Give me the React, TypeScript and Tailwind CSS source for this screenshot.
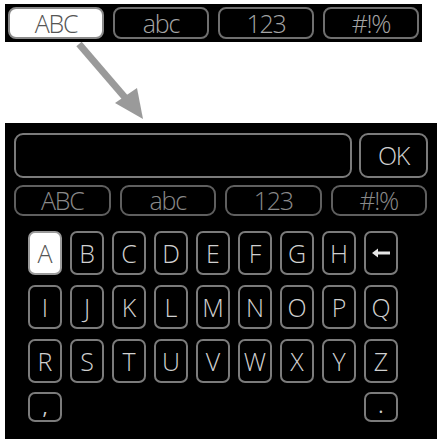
import React from 'react';

const font = { fontFamily: '"Open Sans", "DejaVu Sans", sans-serif' };

const topTabs = ['ABC', 'abc', '123', '#!%'];

const rows: string[][] = [
  ['A', 'B', 'C', 'D', 'E', 'F', 'G', 'H', '←'],
  ['I', 'J', 'K', 'L', 'M', 'N', 'O', 'P', 'Q'],
  ['R', 'S', 'T', 'U', 'V', 'W', 'X', 'Y', 'Z'],
];

const Key: React.FC<{ label: string; active?: boolean }> = ({ label, active }) => {
  if (label === '←') {
    return (
      <div className="w-[34px] h-[44px] rounded-[7px] border-2 border-[#7b7b7b] flex items-center justify-center">
        <svg width="20" height="10" viewBox="0 0 20 10">
          <path d="M1 5 L7 0.5 L7 3.5 L19 3.5 L19 6.5 L7 6.5 L7 9.5 Z" fill="#e6e6e6" />
        </svg>
      </div>
    );
  }
  return (
    <div
      className={`w-[34px] h-[44px] rounded-[7px] border-2 flex items-center justify-center text-[25px] leading-none font-[350] ${
        active ? 'bg-white border-[#9a9a9a] text-[#555]' : 'border-[#7b7b7b] text-[#d0d0d0]'
      }`}
    >
      {label}
    </div>
  );
};

export default function App() {
  return (
    <div className="w-[439px] h-[439px] bg-white overflow-hidden" style={font}>
      {/* top mode selector */}
      <div className="ml-[5px] mt-[4px] w-[417px] h-[38px] bg-black flex items-center gap-[9px] px-[3px]">
        {topTabs.map((t, i) => (
          <div
            key={t}
            className={`flex-1 h-[32px] rounded-[8px] border-2 flex items-center justify-center text-[25px] leading-none tracking-tighter font-[350] ${
              i === 0 ? 'bg-white border-[#8a8a8a] text-[#555]' : 'border-[#6f6f6f] text-[#a5a5a5]'
            }`}
          >
            {t}
          </div>
        ))}
      </div>

      {/* pointer arrow */}
      <svg width="439" height="81" viewBox="0 42 439 81" className="block">
        <line x1="79" y1="44" x2="128" y2="101" stroke="#9a9a9a" strokeWidth="7" />
        <polygon points="143,119 115,103 137,88" fill="#9a9a9a" />
      </svg>

      {/* keyboard panel */}
      <div className="ml-[5px] w-[432px] h-[316px] bg-black pt-[10px]">
        <div className="flex gap-[7px] pl-[9px] pr-[9px]">
          <div className="flex-1 h-[45px] rounded-[9px] border-2 border-[#7b7b7b]" />
          <div className="w-[69px] h-[45px] rounded-[9px] border-2 border-[#7b7b7b] flex items-center justify-center text-[25px] leading-none tracking-tighter font-[350] text-[#d0d0d0]">
            OK
          </div>
        </div>

        <div className="flex gap-[9px] pl-[9px] pr-[10px] mt-[7px]">
          {topTabs.map((t) => (
            <div
              key={t}
              className="flex-1 h-[31px] rounded-[9px] border-2 border-[#5f5f5f] flex items-center justify-center text-[25px] leading-none tracking-tighter font-[350] text-[#8a8a8a]"
            >
              {t}
            </div>
          ))}
        </div>

        <div className="flex flex-col gap-[10px] pl-[23px] mt-[15px]">
          {rows.map((row, r) => (
            <div key={r} className="flex gap-[8px]">
              {row.map((k) => (
                <Key key={k} label={k} active={k === 'A'} />
              ))}
            </div>
          ))}
          <div className="flex justify-between w-[370px] -mt-[1px]">
            <div className="w-[34px] h-[30px] rounded-[7px] border-2 border-[#7b7b7b] flex items-end justify-center pb-[3px] text-[20px] leading-none text-[#d0d0d0]">
              ,
            </div>
            <div className="w-[34px] h-[30px] rounded-[7px] border-2 border-[#7b7b7b] flex items-end justify-center pb-[4px] text-[20px] leading-none text-[#d0d0d0]">
              .
            </div>
          </div>
        </div>
      </div>
    </div>
  );
}
